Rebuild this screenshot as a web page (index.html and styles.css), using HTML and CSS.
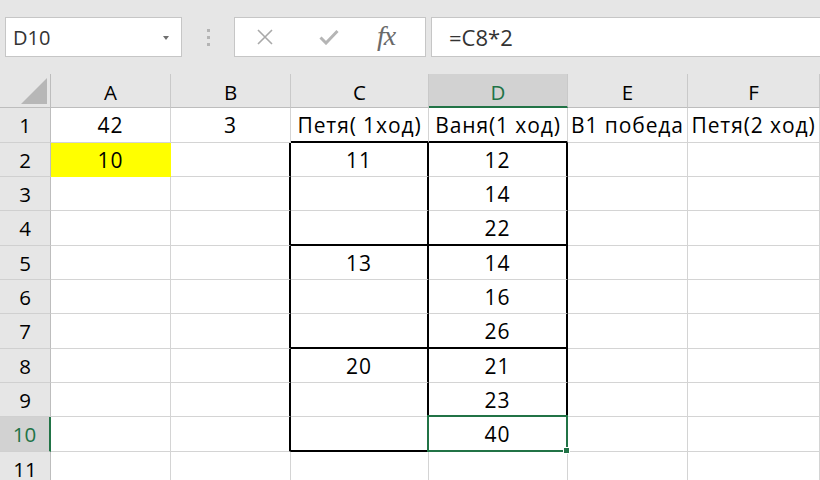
FILE: index.html
```html
<!DOCTYPE html>
<html lang="ru">
<head>
<meta charset="utf-8">
<title>Excel</title>
<link rel="stylesheet" href="styles.css">
</head>
<body>
<div class="app">
  <div class="toolbar">
    <div class="namebox">
      <span class="name">D10</span>
      <span class="dd"></span>
    </div>
    <div class="grip"><i></i><i></i><i></i></div>
    <div class="fbuttons">
      <svg class="ic-x" width="16" height="16" viewBox="0 0 16 16"><path d="M1 1 L15 15 M15 1 L1 15" stroke="#a9a9a9" stroke-width="1.6" fill="none"/></svg>
      <svg class="ic-ok" width="20" height="16" viewBox="0 0 20 16"><path d="M1.5 8.5 L7 14 L18.5 2" stroke="#b5b5b5" stroke-width="3" fill="none"/></svg>
      <span class="fx">fx</span>
    </div>
    <div class="formula">=C8*2</div>
  </div>
  <div class="grid">
    <div class="corner"><svg width="26" height="26" viewBox="0 0 26 26"><path d="M26 0 L26 26 L0 26 Z" fill="#b7b7b7"/></svg></div>
    <div class="ch">A</div><div class="ch">B</div><div class="ch">C</div><div class="ch sel">D</div><div class="ch">E</div><div class="ch">F</div>

    <div class="rh">1</div><div class="c">42</div><div class="c">3</div><div class="c bb">Петя( 1ход)</div><div class="c bb">Ваня(1 ход)</div><div class="c">В1 победа</div><div class="c">Петя(2 ход)</div>
    <div class="rh">2</div><div class="c yellow">10</div><div class="c br">&nbsp;</div><div class="c br">11</div><div class="c br">12</div><div class="c"></div><div class="c"></div>
    <div class="rh">3</div><div class="c"></div><div class="c br"></div><div class="c br"></div><div class="c br">14</div><div class="c"></div><div class="c"></div>
    <div class="rh">4</div><div class="c"></div><div class="c br"></div><div class="c br bb"></div><div class="c br bb">22</div><div class="c"></div><div class="c"></div>
    <div class="rh">5</div><div class="c"></div><div class="c br"></div><div class="c br">13</div><div class="c br">14</div><div class="c"></div><div class="c"></div>
    <div class="rh">6</div><div class="c"></div><div class="c br"></div><div class="c br"></div><div class="c br">16</div><div class="c"></div><div class="c"></div>
    <div class="rh">7</div><div class="c"></div><div class="c br"></div><div class="c br bb"></div><div class="c br bb">26</div><div class="c"></div><div class="c"></div>
    <div class="rh">8</div><div class="c"></div><div class="c br"></div><div class="c br">20</div><div class="c br">21</div><div class="c"></div><div class="c"></div>
    <div class="rh">9</div><div class="c"></div><div class="c br"></div><div class="c br"></div><div class="c br">23</div><div class="c"></div><div class="c"></div>
    <div class="rh rsel">10</div><div class="c"></div><div class="c br"></div><div class="c br bb"></div><div class="c br bb active">40</div><div class="c"></div><div class="c"></div>
    <div class="rh">11</div><div class="c"></div><div class="c"></div><div class="c"></div><div class="c"></div><div class="c"></div><div class="c"></div>
  </div>
</div>
</body>
</html>
```

FILE: styles.css
```css
html, body {
  margin: 0;
  padding: 0;
}
body {
  width: 820px;
  height: 480px;
  overflow: hidden;
  background: #ffffff;
  font-family: "Open Sans", Lato, "Liberation Sans", sans-serif;
}
.app {
  width: 820px;
  height: 480px;
  overflow: hidden;
}
.toolbar {
  height: 74px;
  box-sizing: border-box;
  background: #e6e6e6;
  padding-top: 17px;
  display: flex;
  align-items: flex-start;
}
.toolbar > * {
  flex-shrink: 0;
}
.namebox {
  margin-left: 5px;
  width: 177px;
  height: 40px;
  box-sizing: border-box;
  background: #fff;
  border: 1px solid #c6c6c6;
  display: flex;
  align-items: center;
  justify-content: space-between;
  padding: 0 12px 0 7px;
}
.name {
  font-size: 20px;
  color: #333;
}
.dd {
  width: 0;
  height: 0;
  border-left: 3.5px solid transparent;
  border-right: 3.5px solid transparent;
  border-top: 4px solid #6f6f6f;
  margin-top: 2px;
}
.grip {
  width: 52px;
  height: 40px;
  display: flex;
  flex-direction: column;
  align-items: center;
  justify-content: center;
  gap: 4px;
}
.grip i {
  display: block;
  width: 3px;
  height: 3px;
  background: #b4b4b4;
}
.fbuttons {
  width: 192px;
  height: 40px;
  box-sizing: border-box;
  background: #fff;
  border: 1px solid #c6c6c6;
  display: flex;
  align-items: center;
  padding-left: 22px;
}
.ic-x { margin-right: 46px; }
.ic-ok { margin-right: 38px; }
.fx {
  font-family: "Liberation Serif", serif;
  font-style: italic;
  font-size: 28px;
  color: #6a6a6a;
  letter-spacing: -1px;
  margin-top: -3px;
}
.formula {
  margin-left: 5px;
  width: 400px;
  height: 40px;
  box-sizing: border-box;
  background: #fff;
  border: 1px solid #c6c6c6;
  padding-left: 17px;
  font-size: 22px;
  color: #333;
  line-height: 38px;
}
.grid {
  display: grid;
  grid-template-columns: 51px 120px 120px 138px 139px 120px 1fr;
  grid-template-rows: 34px 35px 34px 34px 35px 34px 34px 35px 34px 34px 35px 34px;
  font-size: 20.5px;
  color: #000;
}
.grid > div {
  box-sizing: border-box;
  display: flex;
  align-items: center;
  justify-content: center;
  white-space: nowrap;
}
.corner {
  background: #e6e6e6;
  border-right: 1px solid #bdbdbd;
  border-bottom: 1px solid #bdbdbd;
  align-items: flex-end !important;
  justify-content: flex-end !important;
  padding: 0 3px 3px 0;
}
.ch {
  background: #e6e6e6;
  border-right: 1px solid #c9c9c9;
  border-bottom: 1px solid #bdbdbd;
  padding-top: 2px;
}
.ch.sel {
  background: #d2d2d2;
  color: #217346;
  border-bottom: 2px solid #217346;
  padding-top: 3px;
}
.rh {
  background: #e6e6e6;
  border-right: 1px solid #bdbdbd;
  border-bottom: 1px solid #d0d0d0;
}
.rh.rsel {
  background: #d2d2d2;
  color: #217346;
  border-right: 2px solid #217346;
}
.c {
  background: #fff;
  border-right: 1px solid #d4d4d4;
  border-bottom: 1px solid #d4d4d4;
  font-size: 21px;
  letter-spacing: 0.9px;
}
.c.yellow {
  background: #ffff00;
  border-color: #ffff00;
}
.c.br {
  border-right: 2px solid #000;
}
.c.bb {
  border-bottom: 2px solid #000;
}
.c.active {
  position: relative;
}
.c.active::after {
  content: "";
  position: absolute;
  left: -2px;
  right: -2px;
  top: -2px;
  bottom: -2px;
  border: 2px solid #217346;
}
.c.active::before {
  content: "";
  position: absolute;
  right: -4px;
  bottom: -4px;
  width: 7px;
  height: 7px;
  box-sizing: border-box;
  background: #217346;
  border: 1px solid #fff;
  z-index: 2;
}
```
